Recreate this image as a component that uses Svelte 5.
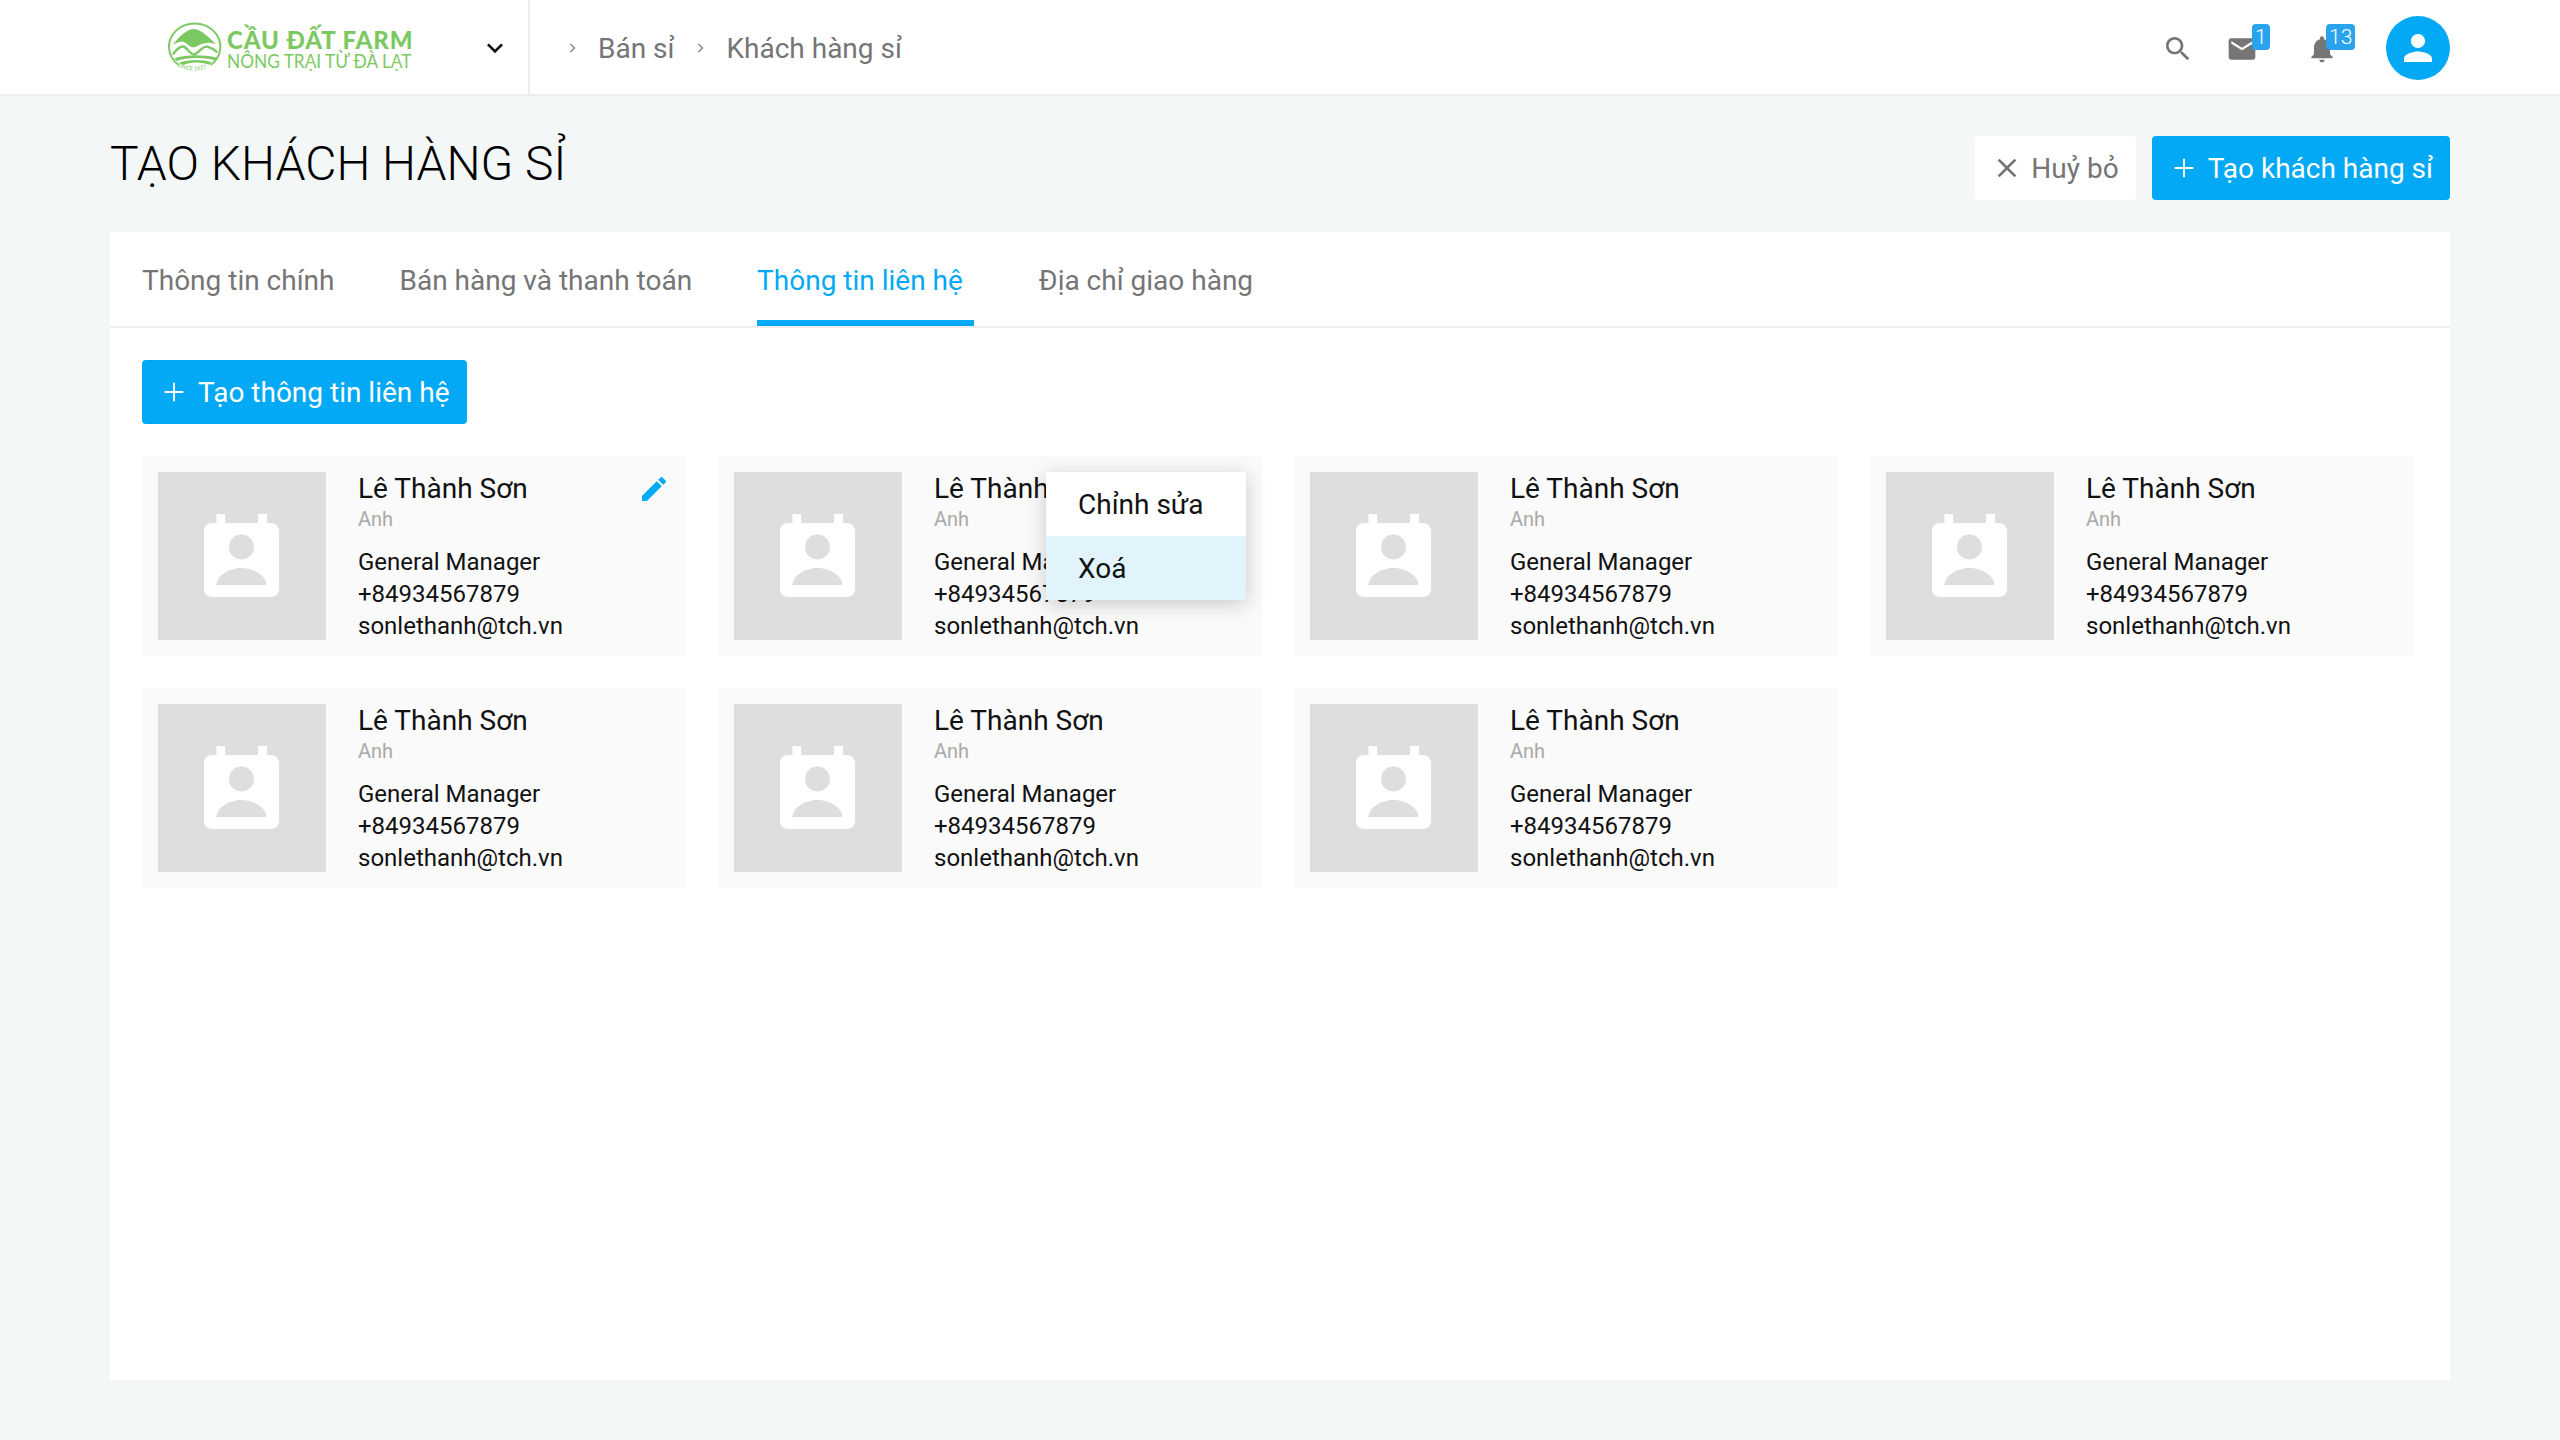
<script lang="ts">
	const tabs = ['Thông tin chính', 'Bán hàng và thanh toán', 'Thông tin liên hệ', 'Địa chỉ giao hàng'];
	const activeTab = 2;
	const contacts = Array.from({ length: 7 }, () => ({
		name: 'Lê Thành Sơn',
		relation: 'Anh',
		title: 'General Manager',
		phone: '+84934567879',
		email: 'sonlethanh@tch.vn'
	}));
</script>

<header class="topbar">
	<div class="brand">
		<svg class="logo-mark" viewBox="0 0 210 195" aria-hidden="true">
			<path d="M59 150 A77 70 0 1 1 155 150" fill="none" stroke="#7cc961" stroke-width="6" />
			<path d="M42 88 C60 65 85 42 105 42 C125 42 150 68 172 88 C155 82 140 82 125 88 C112 95 105 100 95 95 C85 88 75 78 65 80 C55 82 48 85 42 88Z" fill="#7cc961" />
			<path d="M42 118 C55 100 65 92 75 95 C85 100 95 120 105 118 C120 115 130 92 145 95 C155 98 168 105 175 112" fill="none" stroke="#7cc961" stroke-width="7" />
			<path d="M46 130 C80 118 130 118 175 128 L168 136 C130 126 85 126 52 138Z" fill="#7cc961" />
			<path d="M60 143 C90 132 130 133 158 142 L150 149 C125 140 95 140 72 150Z" fill="#7cc961" />
			<path id="since-arc" d="M55 152 Q105 182 160 152" fill="none" />
			<text class="since"><textPath href="#since-arc">SINCE 1927</textPath></text>
		</svg>
		<div class="logo-text">
			<span class="logo-main">CẦU ĐẤT FARM</span>
			<span class="logo-sub">NÔNG TRẠI TỪ ĐÀ LẠT</span>
		</div>
		<svg class="brand-caret" viewBox="0 0 24 24" aria-hidden="true">
			<path d="M7.41 8.59 12 13.17l4.59-4.58L18 10l-6 6-6-6z" />
		</svg>
	</div>

	<nav class="crumbs">
		<svg class="crumb-sep" viewBox="0 0 24 24" aria-hidden="true"><path d="M10 7l5 5-5 5" /></svg>
		<span>Bán sỉ</span>
		<svg class="crumb-sep" viewBox="0 0 24 24" aria-hidden="true"><path d="M10 7l5 5-5 5" /></svg>
		<span>Khách hàng sỉ</span>
	</nav>

	<div class="actions">
		<svg class="icon" viewBox="0 0 24 24" aria-hidden="true">
			<path d="M15.5 14h-.79l-.28-.27C15.41 12.59 16 11.11 16 9.5 16 5.91 13.09 3 9.5 3S3 5.91 3 9.5 5.91 16 9.5 16c1.61 0 3.09-.59 4.23-1.57l.27.28v.79l5 4.99L20.49 19l-4.99-5zm-6 0C7.01 14 5 11.99 5 9.5S7.01 5 9.5 5 14 7.01 14 9.5 11.99 14 9.5 14z" />
		</svg>
		<div class="icon-wrap mail">
			<svg class="icon" viewBox="0 0 24 24" aria-hidden="true">
				<path d="M20 4H4c-1.1 0-2 .9-2 2v12c0 1.1.9 2 2 2h16c1.1 0 2-.9 2-2V6c0-1.100-.9-2-2-2zm0 4l-8 5-8-5V6l8 5 8-5v2z" />
			</svg>
			<span class="badge">1</span>
		</div>
		<div class="icon-wrap bell">
			<svg class="icon" viewBox="0 0 24 24" aria-hidden="true">
				<path d="M12 22c1.100 0 2-.9 2-2h-4c0 1.100.9 2 2 2zm6-6v-5c0-3.070-1.630-5.640-4.500-6.320V4c0-.83-.67-1.500-1.500-1.500s-1.500.67-1.500 1.500v.68C7.640 5.360 6 7.920 6 11v5l-2 2v1h16v-1l-2-2z" />
			</svg>
			<span class="badge">13</span>
		</div>
		<div class="avatar">
			<svg viewBox="0 0 24 24" aria-hidden="true">
				<path d="M12 12c2.210 0 4-1.790 4-4s-1.790-4-4-4-4 1.790-4 4 1.790 4 4 4zm0 2c-2.670 0-8 1.340-8 4v2h16v-2c0-2.660-5.330-4-8-4z" />
			</svg>
		</div>
	</div>
</header>

<main class="page">
	<div class="page-head">
		<h1>TẠO KHÁCH HÀNG SỈ</h1>
		<div class="page-buttons">
			<button class="btn btn-plain">
				<svg viewBox="0 0 24 24" aria-hidden="true"><path d="M19 6.410 17.590 5 12 10.590 6.410 5 5 6.410 10.590 12 5 17.590 6.410 19 12 13.410 17.590 19 19 17.590 13.410 12z" /></svg>
				Huỷ bỏ
			</button>
			<button class="btn btn-primary">
				<svg viewBox="0 0 24 24" aria-hidden="true"><path d="M19 12.700h-6.300V19h-1.400v-6.300H5v-1.400h6.300V5h1.400v6.300H19z" /></svg>
				Tạo khách hàng sỉ
			</button>
		</div>
	</div>

	<section class="panel">
		<div class="tabs">
			{#each tabs as tab, i}
				<div class="tab" class:active={i === activeTab}>{tab}</div>
			{/each}
		</div>

		<div class="panel-body">
			<button class="btn btn-primary">
				<svg viewBox="0 0 24 24" aria-hidden="true"><path d="M19 12.700h-6.300V19h-1.400v-6.300H5v-1.400h6.300V5h1.400v6.300H19z" /></svg>
				Tạo thông tin liên hệ
			</button>

			<div class="contacts">
				{#each contacts as c, i}
					<article class="contact">
						<div class="photo">
							<svg viewBox="0 0 168 168" aria-hidden="true">
								<path d="M58.500 42h8.500v9h33v-9h9v9h4c4.400 0 8 3.600 8 8v58c0 4.400-3.600 8-8 8h-59c-4.400 0-8-3.600-8-8v-58c0-4.400 3.600-8 8-8h4.500z" fill="#fff" />
								<circle cx="83.500" cy="75" r="12.500" fill="#dedede" />
								<path d="M58.500 113c0-10 14-17 25-17s25 7 25 17z" fill="#dedede" />
							</svg>
						</div>
						<div class="info">
							<div class="name">{c.name}</div>
							<div class="relation">{c.relation}</div>
							<div class="line">{c.title}</div>
							<div class="line">{c.phone}</div>
							<div class="line">{c.email}</div>
						</div>
						{#if i === 0}
							<svg class="edit" viewBox="0 0 24 24" aria-hidden="true">
								<path d="M3 17.250V21h3.750L17.810 9.940l-3.750-3.750L3 17.250zM20.710 7.040c.39-.39.39-1.020 0-1.410l-2.340-2.340c-.39-.39-1.020-.39-1.410 0l-1.830 1.830 3.750 3.750 1.830-1.830z" />
							</svg>
						{/if}
						{#if i === 1}
							<div class="menu">
								<div class="menu-item">Chỉnh sửa</div>
								<div class="menu-item hover">Xoá</div>
							</div>
						{/if}
					</article>
				{/each}
			</div>
		</div>
	</section>
</main>

<style>
	:global(body) {
		background: #f4f7f8;
		font-family: Roboto, 'Noto Sans', sans-serif;
		color: #212121;
	}

	.topbar {
		display: flex;
		align-items: stretch;
		height: 94px;
		background: #fff;
		border-bottom: 2px solid #eeeeee;
	}

	.brand {
		display: flex;
		align-items: center;
		width: 530px;
		padding: 0 16px 0 159px;
		box-sizing: border-box;
		border-right: 2px solid #eeeeee;
	}

	.logo-mark {
		flex: none;
		width: 70px;
		height: 65px;
		margin-top: 1px;
	}

	.since {
		font-size: 17px;
		font-weight: 700;
		fill: #9ad785;
		font-family: Lato, sans-serif;
	}

	.logo-text {
		display: flex;
		flex-direction: column;
		width: 186px;
		margin-left: -2px;
		margin-right: auto;
		color: #7cc961;
		font-family: Lato, sans-serif;
		white-space: nowrap;
	}

	.logo-main {
		margin-top: 4px;
		font-size: 24px;
		line-height: 24px;
		font-weight: 900;
		letter-spacing: 0.9px;
	}

	.logo-sub {
		display: inline-block;
		font-size: 19.500px;
		line-height: 18px;
		transform: scaleX(0.885);
		transform-origin: left center;
	}

	.brand-caret {
		flex: none;
		width: 32px;
		height: 32px;
		margin-top: 2px;
		margin-right: 1px;
		fill: #111;
	}

	.crumbs {
		display: flex;
		align-items: center;
		color: #757575;
		font-size: 28px;
		padding: 2px 0 0 32px;
	}

	.crumb-sep {
		width: 20px;
		height: 20px;
		fill: none;
		stroke: #757575;
		stroke-width: 1.500;
		margin-right: 16px;
	}

	.crumb-sep ~ .crumb-sep {
		margin-left: 16px;
	}

	.actions {
		display: flex;
		align-items: center;
		margin-left: auto;
		padding: 2px 110px 0 0;
	}

	.icon {
		display: block;
		width: 32px;
		height: 32px;
		margin-top: 2px;
		fill: #757575;
	}

	.icon-wrap {
		position: relative;
	}

	.mail {
		margin-left: 32px;
	}

	.bell {
		margin-left: 48px;
		margin-right: 48px;
	}

	.badge {
		position: absolute;
		top: -7px;
		height: 26px;
		min-width: 16px;
		padding: 0 3px;
		box-sizing: border-box;
		background: #2aa3ef;
		color: #fff;
		border-radius: 4px;
		font-size: 21px;
		font-weight: 300;
		line-height: 26px;
		text-align: center;
	}

	.mail .badge {
		left: 26px;
	}

	.bell .badge {
		left: 20px;
	}

	.avatar {
		display: flex;
		align-items: center;
		justify-content: center;
		width: 64px;
		height: 64px;
		border-radius: 50%;
		background: #03a9f4;
	}

	.avatar svg {
		width: 42px;
		height: 42px;
		fill: #fff;
	}

	.page {
		padding: 40px 110px 60px;
	}

	.page-head {
		display: flex;
		justify-content: space-between;
		align-items: flex-start;
		margin-bottom: 32px;
	}

	h1 {
		margin: 0;
		font-size: 48px;
		line-height: 56px;
		font-weight: 300;
		color: #000;
	}

	.page-buttons {
		display: flex;
		gap: 16px;
	}

	.btn {
		display: flex;
		align-items: center;
		gap: 8px;
		height: 64px;
		padding: 0 17px 0 16px;
		border: none;
		border-radius: 4px;
		font-family: inherit;
		font-size: 28px;
		white-space: nowrap;
	}

	.btn svg {
		width: 32px;
		height: 32px;
		fill: currentColor;
	}

	.btn-plain {
		background: #fff;
		color: #757575;
	}

	.btn-primary {
		background: #03a9f4;
		color: #fff;
	}

	.panel {
		height: 1148px;
		background: #fff;
	}

	.tabs {
		display: flex;
		gap: 65px;
		height: 94px;
		padding: 0 32px;
		border-bottom: 2px solid #eeeeee;
	}

	.tab {
		font-size: 28px;
		line-height: 98px;
		height: 94px;
		box-sizing: border-box;
		color: #757575;
		white-space: nowrap;
	}

	.tab.active {
		color: #03a9f4;
		padding-right: 11px;
		border-bottom: 6px solid #03a9f4;
	}

	.panel-body {
		padding: 32px;
	}

	.contacts {
		display: grid;
		grid-template-columns: repeat(4, 544px);
		gap: 32px;
		margin-top: 32px;
	}

	.contact {
		position: relative;
		display: flex;
		gap: 32px;
		height: 200px;
		padding: 16px;
		box-sizing: border-box;
		background: #fafafa;
	}

	.photo {
		width: 168px;
		height: 168px;
		background: #dedede;
	}

	.photo svg {
		display: block;
	}

	.name {
		font-size: 28px;
		line-height: 32px;
		margin-top: 1px;
		color: #111;
	}

	.relation {
		font-size: 20px;
		line-height: 28px;
		margin-bottom: 13px;
		color: #a8a8a8;
	}

	.line {
		font-size: 24px;
		line-height: 32px;
		color: #111;
	}

	.edit {
		position: absolute;
		top: 17px;
		right: 16px;
		width: 32px;
		height: 32px;
		fill: #03a9f4;
	}

	.menu {
		position: absolute;
		top: 16px;
		left: 328px;
		width: 200px;
		background: #fff;
		box-shadow: 0 4px 20px rgba(0, 0, 0, 0.2);
		z-index: 2;
	}

	.menu-item {
		height: 64px;
		padding-left: 32px;
		font-size: 28px;
		line-height: 66px;
		color: #111;
	}

	.menu-item.hover {
		background: #e1f4fb;
	}
</style>
